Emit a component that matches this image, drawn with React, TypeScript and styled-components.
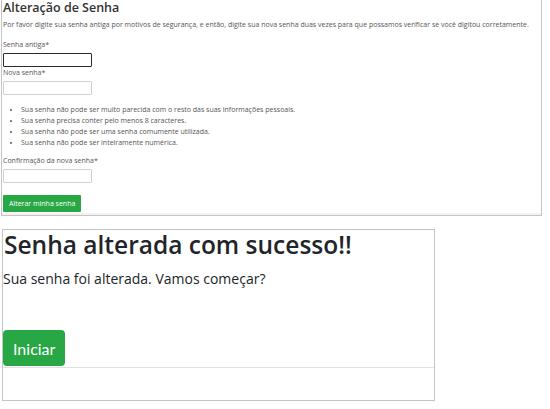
import React from "react";
import styled, { createGlobalStyle } from "styled-components";

const Global = createGlobalStyle`
  html, body { margin: 0; padding: 0; background: #ffffff; }
  body { font-family: "Open Sans", "Noto Sans", sans-serif; color: #333; }
  * { box-sizing: border-box; }
`;

const Page = styled.div`
  width: 550px;
  height: 409px;
  overflow: hidden;
  display: flex;
  flex-direction: column;
`;

const FormPanel = styled.section`
  margin-left: 1px;
  width: 541px;
  height: 216px;
  border: 1px solid #c4c4c4;
  border-top: none;
  box-shadow: inset 0 -2px 0 #f3f3f3;
  padding: 0 0 0 1px;
  display: flex;
  flex-direction: column;
  align-items: flex-start;
`;

const FormTitle = styled.h2`
  margin: -1px 0 0 0;
  font-size: 12.5px;
  line-height: 17px;
  font-weight: 600;
  color: #333;
`;

const Intro = styled.p`
  margin: 4px 0 0 0;
  font-size: 7px;
  line-height: 10px;
  color: #555;
  white-space: nowrap;
`;

const Field = styled.div<{ $gap?: number }>`
  display: flex;
  flex-direction: column;
  align-items: flex-start;
  margin-top: ${(p) => p.$gap ?? 0}px;
`;

const Label = styled.label`
  font-size: 7px;
  line-height: 10px;
  color: #555;
`;

const TextInput = styled.input<{ $focused?: boolean }>`
  margin-top: 3px;
  width: 89px;
  height: 14px;
  padding: 0;
  border: ${(p) => (p.$focused ? "1.5px solid #2b2b2b" : "1px solid #d2d2d2")};
  border-radius: 1px;
  background: #fff;
  outline: none;
`;

const Rules = styled.ul`
  margin: 9px 0 0 0;
  padding-left: 18px;
  font-size: 7px;
  line-height: 11px;
  color: #555;
  li::marker { font-size: 6px; }
`;

const SmallButton = styled.button`
  margin-top: 12px;
  height: 17px;
  padding: 0 6px;
  border: none;
  border-radius: 1px;
  background: #28a745;
  color: #fff;
  font-family: inherit;
  font-size: 7px;
  line-height: 17px;
`;

const SuccessPanel = styled.section`
  margin: 13px 0 0 2px;
  width: 433px;
  height: 172px;
  border: 1px solid #c4c4c4;
  display: flex;
  flex-direction: column;
  align-items: flex-start;
`;

const SuccessTitle = styled.h1`
  margin: 0 0 0 1px;
  font-size: 24.5px;
  line-height: 30px;
  font-weight: 600;
  color: #212529;
`;

const SuccessText = styled.p`
  margin: 9px 0 0 0;
  font-size: 14px;
  line-height: 20px;
  color: #212529;
`;

const BigButton = styled.button`
  margin-top: 41px;
  height: 36px;
  padding: 0 10px;
  border: none;
  border-radius: 4px;
  background: #28a745;
  color: #fff;
  font-family: "Lato", "Open Sans", sans-serif;
  font-size: 16px;
`;

const Divider = styled.hr`
  align-self: stretch;
  margin: 1px 0 0 0;
  border: none;
  border-top: 1px solid #e2e2e2;
`;

export default function App() {
  return (
    <Page>
      <Global />
      <FormPanel>
        <FormTitle>Alteração de Senha</FormTitle>
        <Intro>
          Por favor digite sua senha antiga por motivos de segurança, e então, digite sua nova senha duas vezes para que possamos verificar se você digitou corretamente.
        </Intro>
        <Field $gap={10}>
          <Label>Senha antiga*</Label>
          <TextInput type="password" $focused />
        </Field>
        <Field $gap={1}>
          <Label>Nova senha*</Label>
          <TextInput type="password" />
        </Field>
        <Rules>
          <li>Sua senha não pode ser muito parecida com o resto das suas informações pessoais.</li>
          <li>Sua senha precisa conter pelo menos 8 caracteres.</li>
          <li>Sua senha não pode ser uma senha comumente utilizada.</li>
          <li>Sua senha não pode ser inteiramente numérica.</li>
        </Rules>
        <Field $gap={8}>
          <Label>Confirmação da nova senha*</Label>
          <TextInput type="password" />
        </Field>
        <SmallButton>Alterar minha senha</SmallButton>
      </FormPanel>
      <SuccessPanel>
        <SuccessTitle>Senha alterada com sucesso!!</SuccessTitle>
        <SuccessText>Sua senha foi alterada. Vamos começar?</SuccessText>
        <BigButton>Iniciar</BigButton>
        <Divider />
      </SuccessPanel>
    </Page>
  );
}
